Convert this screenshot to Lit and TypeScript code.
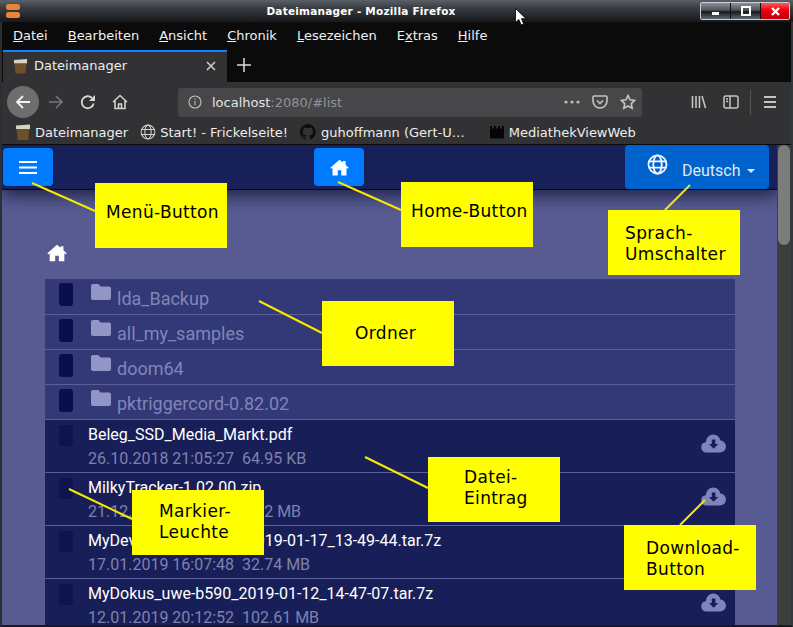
import { LitElement, html, css, svg } from "lit";
import { customElement } from "lit/decorators.js";

const homePath = "M12 3 1.5 12.2l1.2 1.3L4 12.4V21h6v-6h4v6h6v-8.6l1.3 1.1 1.2-1.3L19 9V4.5h-3v1.9z";
const homeIcon = (cls: string) => html`<svg class=${cls} viewBox="0 0 24 24"><path fill="#fff" d=${homePath}/></svg>`;
const folderIcon = html`<svg class="folder" viewBox="0 0 20 16"><path fill="#9296c6" d="M2 0h5.5l2 2.4H18a2 2 0 0 1 2 2V14a2 2 0 0 1-2 2H2a2 2 0 0 1-2-2V2a2 2 0 0 1 2-2z"/></svg>`;
const cloudIcon = html`<svg class="cloud" viewBox="0 0 25 19"><path fill="#7f84bc" d="M5.200 18.500A5.200 5.200 0 0 1 .2 13.300 5.200 5.200 0 0 1 4.800 8.200 7.800 7.800 0 0 1 12.400.5 7.800 7.800 0 0 1 19.400 6.500 6 6 0 0 1 25 12.500 6 6 0 0 1 19 18.500z"/><path fill="#181f58" d="M10.800 5.500h3.600V10h2.800l-4.600 4.800L8 10h2.800z"/></svg>`;
const boxIcon = (cls: string) => html`<svg class=${cls} viewBox="0 0 16 16"><path fill="#6d4f2c" d="M1.5 4h13l-1 11a1 1 0 0 1-1 1h-9a1 1 0 0 1-1-1z"/><path fill="#d8d2c4" d="M1 1.500 15 .5V5H1z"/></svg>`;
const globe = (cls: string, c: string, w: string) => html`<svg class=${cls} viewBox="0 0 20 20" fill="none" stroke=${c} stroke-width=${w}><circle cx="10" cy="10" r="8.6"/><ellipse cx="10" cy="10" rx="4" ry="8.6"/><path d="M1.800 7h16.400M1.800 13h16.400"/></svg>`;

const ANN = [
  { x: 95, y: 183, t: ["Menü-Button"], px: 11, py: 19 },
  { x: 401, y: 182, t: ["Home-Button"], px: 10, py: 19 },
  { x: 608, y: 210, t: ["Sprach-", "Umschalter"], px: 17, py: 13 },
  { x: 322, y: 301, t: ["Ordner"], px: 33, py: 22 },
  { x: 428, y: 457, t: ["Datei-", "Eintrag"], px: 36, py: 10 },
  { x: 132, y: 490, t: ["Markier-", "Leuchte"], px: 27, py: 11 },
  { x: 624, y: 525, t: ["Download-", "Button"], px: 22, py: 13 },
];
const LINES = [
  [32, 183, 95, 211], [338, 182, 401, 210], [690, 185, 665, 210], [259, 301, 322, 333],
  [365, 457, 428, 488], [69, 489, 132, 519], [705, 500, 680, 525],
];
const FOLDERS = ["lda_Backup", "all_my_samples", "doom64", "pktriggercord-0.82.02"];
const FILES = [
  ["Beleg_SSD_Media_Markt.pdf", "26.10.2018 21:05:27  64.95 KB"],
  ["MilkyTracker-1.02.00.zip", "21.12.2018 10:11:32  1.22 MB"],
  ["MyDevuan_uwe-b590_2019-01-17_13-49-44.tar.7z", "17.01.2019 16:07:48  32.74 MB"],
  ["MyDokus_uwe-b590_2019-01-12_14-47-07.tar.7z", "12.01.2019 20:12:52  102.61 MB"],
];

@customElement("app-root")
export class AppRoot extends LitElement {
  static styles = css`
    :host { display: block; position: relative; width: 793px; height: 627px; overflow: hidden; background: #0b0b0b; font-family: "DejaVu Sans", sans-serif; }
    .win { display: flex; flex-direction: column; height: 625px; border-left: 2px solid #2c2f33; border-right: 2px solid #33363a; border-bottom: 2px solid #17191c; box-sizing: content-box; width: 789px; }
    svg { display: block; flex: none; }
    .title { height: 22px; flex: none; margin-left: -2px; margin-right: -2px; background: linear-gradient(#5b6067, #3a3e44 35%, #1a1c1f 90%); display: flex; align-items: center; position: relative; }
    .title .tt { position: absolute; left: 0; width: 722px; text-align: center; color: #fff; font: bold 10.5px "DejaVu Sans", sans-serif; letter-spacing: .22px; }
    .orange { margin-left: 5px; width: 16px; height: 16px; }
    .wbtns { margin-left: auto; margin-right: 3px; display: flex; height: 16px; border: 1px solid #c9ced4; border-radius: 2px; box-sizing: content-box; }
    .wb { width: 29px; height: 16px; background: linear-gradient(#8b9299, #4c5257 45%, #16181a 55%, #5f6a6e); display: flex; align-items: center; justify-content: center; border-right: 1px solid #0f1012; }
    .wb.x { background: linear-gradient(#ff5a5a, #e8000f 45%, #c4000c); border: 0; width: 28px; }
    .menu { height: 28px; flex: none; box-sizing: border-box; padding: 0 0 2px 11px; background: #0b0b0b; display: flex; align-items: center; gap: 20px; color: #f1f1f1; font-size: 13px; }
    .tabs { height: 32px; flex: none; background: #0b0b0b; display: flex; align-items: stretch; }
    .tab { width: 224px; margin-left: 1px; background: #323234; border-top: 2px solid #0a84ff; display: flex; align-items: center; padding: 0 0 3px 10px; box-sizing: border-box; color: #eee; font-size: 13px; }
    .tab .fav { width: 15px; height: 16px; margin-right: 6px; }
    .tab .cl { margin-left: auto; margin-right: 11px; width: 10px; height: 10px; }
    .plus { width: 14px; height: 14px; margin: 8px 0 0 10px; }
    .nav { height: 35px; flex: none; box-sizing: border-box; padding-top: 5px; background: #323234; display: flex; align-items: center; position: relative; }
    .back { width: 32px; height: 32px; border-radius: 50%; background: #6e6e6f; margin-left: 5px; display: flex; align-items: center; justify-content: center; }
    .ic { width: 16px; height: 16px; }
    .fw { margin-left: 9px; }
    .rl { margin-left: 16px; }
    .hm { margin-left: 16px; }
    .url { margin-left: 50px; width: 464px; height: 29px; background: #474749; border-radius: 3px; display: flex; align-items: center; padding-left: 10px; box-sizing: border-box; font-size: 13px; color: #e4e4e4; }
    .url i { font-style: normal; color: #929293; }
    .url .inf { width: 14px; height: 14px; margin-right: 10px; }
    .url .r { margin-left: auto; display: flex; align-items: center; gap: 12px; margin-right: 6px; }
    .tools { display: flex; align-items: center; margin-left: 49px; }
    .tools .sb { margin-left: 16px; }
    .tools .dv { width: 1px; height: 25px; background: #555; margin: 0 11px; }
    .bm { height: 28px; flex: none; padding-top: 3px; background: #323234; display: flex; align-items: center; color: #eee; font-size: 13px; border-bottom: 1px solid #0b0b0b; box-sizing: border-box; }
    .bm span { white-space: nowrap; }
    .bm svg { width: 16px; height: 16px; margin-right: 4px; }
    .bm .b1 { margin-left: 13px; margin-right: 4px; }
    .bm .b2 { margin-left: 12px; }
    .bm .b3 { margin-left: 12px; margin-right: 5px; }
    .bm .b4 { margin-left: 25px; margin-right: 5px; width: 14px; }
    .page { flex: 1; display: flex; min-height: 0; }
    .view { flex: 1; min-width: 0; background: #575b92; font-family: Roboto, sans-serif; position: relative; display: flex; flex-direction: column; overflow: hidden; }
    .sbar { width: 14px; background: #3d3d3d; flex: none; }
    .thumb { width: 12px; height: 100px; margin-left: 1px; background: #7c7c7c; border-radius: 6px; }
    .bar { height: 44px; flex: none; background: #182059; border-bottom: 1px solid #0a0a14; box-shadow: 0 6px 16px rgba(10, 12, 40, .7); display: flex; align-items: flex-start; position: relative; box-sizing: content-box; }
    .btn { width: 50px; height: 38px; margin-top: 3px; background: #007bff; border-radius: 4px; display: flex; align-items: center; justify-content: center; }
    .btn.m { margin-left: 1px; }
    .btn.h { margin-left: 261px; }
    .btn svg.bars { width: 18px; height: 13px; }
    .btn svg.hi { width: 21px; height: 21px; }
    .lang { margin-left: auto; margin-right: 8px; width: 144px; height: 44px; background: #0062cc; border-radius: 4px; display: flex; align-items: flex-start; color: #dfe9f7; font-size: 16px; box-sizing: border-box; padding-left: 22px; }
    .lang .gl { width: 21px; height: 21px; margin-top: 9px; }
    .lang span { margin: 16px 0 0 14px; }
    .lang b { width: 0; height: 0; margin: 24px 0 0 7px; border: 4px solid transparent; border-top-color: #dfe9f7; border-bottom: 0; }
    .crumb { margin: 52px 0 0 44px; height: 24px; flex: none; }
    .crumb svg { width: 22px; height: 22px; }
    .list { margin: 13px 0 0 43px; width: 690px; flex: none; }
    .row { display: flex; position: relative; box-sizing: border-box; border-top: 1px solid #5a5f9b; }
    .row:first-child { border-top: 0; }
    .dir { height: 35px; background: #333877; align-items: flex-start; }
    .dot { width: 14px; border-radius: 3px; margin-left: 14px; flex: none; }
    .dir .dot { height: 23px; margin-top: 4px; background: #0a0f4b; }
    .folder { width: 20px; height: 16px; margin: 5px 0 0 18px; }
    .name { margin: 8px 0 0 6px; font-size: 18px; line-height: 22px; color: #8185b6; white-space: nowrap; }
    .row:first-child .name { margin-top: 9px; }
    .file { height: 53px; background: #181f58; }
    .file .dot { height: 21px; margin-top: 5px; background: #0f144d; }
    .info { margin-left: 15px; flex: 1; }
    .fn { margin-top: 5px; font-size: 16px; line-height: 20px; color: #fff; white-space: nowrap; }
    .dt { margin-top: 4px; font-size: 16px; line-height: 20px; color: #7e82ad; white-space: pre; }
    .cloud { width: 25px; height: 19px; position: absolute; right: 9px; top: 14px; }
    .ann { position: absolute; width: 132px; height: 65px; background: #ffff00; color: #000; font: 17px/21px "DejaVu Sans", sans-serif; letter-spacing: .35px; box-sizing: border-box; }
    .ann div { white-space: nowrap; }
    .lines { position: absolute; left: 0; top: 0; width: 793px; height: 627px; pointer-events: none; }
    .cursor { position: absolute; left: 515px; top: 8px; width: 12px; height: 18px; }
  `;

  render() {
    const st = "#d6d6d6";
    return html`
      <div class="win">
        <div class="title">
          <svg class="orange" viewBox="0 0 16 16"><rect x="1" y="1" width="14" height="6" rx="2.5" fill="#e8833a"/><rect x="1" y="9" width="14" height="6" rx="2.5" fill="#e8833a"/></svg>
          <div class="tt">Dateimanager - Mozilla Firefox</div>
          <div class="wbtns">
            <div class="wb"><svg width="8" height="8" viewBox="0 0 8 8"><rect y="5" width="7" height="3" fill="#fff"/></svg></div>
            <div class="wb"><svg width="10" height="10" viewBox="0 0 10 10"><rect x="1" y="1" width="8" height="8" fill="none" stroke="#fff" stroke-width="2"/></svg></div>
            <div class="wb x"><svg width="9" height="9" viewBox="0 0 9 9"><path d="M1 1l7 7M8 1 1 8" stroke="#fff" stroke-width="2.4"/></svg></div>
          </div>
        </div>
        <div class="menu">
          <span><u>D</u>atei</span><span><u>B</u>earbeiten</span><span><u>A</u>nsicht</span><span><u>C</u>hronik</span><span><u>L</u>esezeichen</span><span>E<u>x</u>tras</span><span><u>H</u>ilfe</span>
        </div>
        <div class="tabs">
          <div class="tab">${boxIcon("fav")}Dateimanager
            <svg class="cl" viewBox="0 0 10 10"><path d="M1 1l8 8M9 1 1 9" stroke="#ccc" stroke-width="1.6"/></svg>
          </div>
          <svg class="plus" viewBox="0 0 14 14"><path d="M7 0v14M0 7h14" stroke="#ddd" stroke-width="1.5"/></svg>
        </div>
        <div class="nav">
          <div class="back"><svg class="ic" viewBox="0 0 16 16" fill="none" stroke="#f2f2f2" stroke-width="1.8"><path d="M15 8H2M8 2 2 8l6 6"/></svg></div>
          <svg class="ic fw" viewBox="0 0 16 16" fill="none" stroke="#77777a" stroke-width="1.6"><path d="M1 8h13M8 2l6 6-6 6"/></svg>
          <svg class="ic rl" viewBox="0 0 16 16" fill="none" stroke=${st} stroke-width="1.8"><path d="M13.6 9.500A6 6 0 1 1 12 4"/><path fill=${st} stroke="none" d="M15 1v6H9z"/></svg>
          <svg class="ic hm" viewBox="0 0 16 16" fill="none" stroke=${st} stroke-width="1.5"><path d="M1 8l7-6.500L15 8M3 7v7.500h10V7"/><path d="M6.500 14.500V10h3v4.500"/></svg>
          <div class="url">
            <svg class="inf" viewBox="0 0 14 14" fill="none" stroke="#c0c0c0" stroke-width="1.1"><circle cx="7" cy="7" r="6"/><path d="M7 6v4.200M7 3.600v1.200"/></svg>
            <span>localhost<i>:2080/#list</i></span>
            <div class="r">
              <svg width="16" height="4" viewBox="0 0 16 4" fill="#bdbdbd"><circle cx="2" cy="2" r="1.6"/><circle cx="8" cy="2" r="1.6"/><circle cx="14" cy="2" r="1.6"/></svg>
              <svg class="ic" viewBox="0 0 16 16" fill="none" stroke="#c4c4c4" stroke-width="1.6"><path d="M2 2h12a1 1 0 0 1 1 1v4a7 7 0 0 1-14 0V3a1 1 0 0 1 1-1z"/><path d="M5 6.500l3 3 3-3"/></svg>
              <svg class="ic" viewBox="0 0 16 16" fill="none" stroke="#c4c4c4" stroke-width="1.6"><path d="M8 1.500l2 4.300 4.700.6-3.400 3.200.9 4.700L8 12l-4.200 2.300.9-4.700L1.300 6.400 6 5.800z"/></svg>
            </div>
          </div>
          <div class="tools">
            <svg class="ic" viewBox="0 0 16 16" fill="none" stroke="#c4c4c4" stroke-width="1.6"><path d="M1.500 2v12M5 2v12M8.500 2v12M11 2l3.500 12"/></svg>
            <svg class="ic sb" viewBox="0 0 16 16" fill="none" stroke="#c4c4c4" stroke-width="1.5"><rect x="1" y="2" width="14" height="12" rx="2"/><path d="M7 2v12M3 5h2M3 7.500h2"/></svg>
            <div class="dv"></div>
            <svg class="ic" viewBox="0 0 16 16" stroke="#c4c4c4" stroke-width="1.8"><path d="M2 3h12M2 8h12M2 13h12"/></svg>
          </div>
        </div>
        <div class="bm">
          ${boxIcon("b1")}<span>Dateimanager</span>
          ${globe("b2", "#cfcfcf", "1.3")}<span>Start! - Frickelseite!</span>
          <svg class="b3" viewBox="0 0 16 16"><path fill="#0d0d0d" d="M8 0a8 8 0 0 0-2.500 15.600c.4.1.5-.2.5-.4v-1.400c-2.200.5-2.700-1-2.700-1-.4-.9-.9-1.200-.9-1.200-.7-.5.1-.5.1-.5.8.1 1.200.8 1.200.8.7 1.200 1.900.9 2.300.7.100-.5.300-.9.500-1.100-1.800-.2-3.700-.9-3.700-4 0-.9.300-1.600.8-2.100-.1-.2-.4-1 .1-2.100 0 0 .7-.2 2.200.8a7.500 7.500 0 0 1 4 0c1.500-1 2.200-.8 2.200-.8.500 1.100.2 1.900.1 2.100.5.600.8 1.300.8 2.100 0 3.100-1.900 3.700-3.700 3.900.3.300.6.800.6 1.500v2.200c0 .2.100.5.600.4A8 8 0 0 0 8 0z"/></svg>
          <span>guhoffmann (Gert-U…</span>
          <svg class="b4" viewBox="0 0 14 14"><path fill="#050505" d="M0 1h2v2.500h2V1h2v2.500h2V1h2v2.500h2V1h2v12.500H0z"/></svg>
          <span>MediathekViewWeb</span>
        </div>
        <div class="page">
          <div class="view">
            <div class="bar">
              <div class="btn m"><svg class="bars" viewBox="0 0 18 13" fill="#fff"><rect width="18" height="2"/><rect y="5.500" width="18" height="2"/><rect y="11" width="18" height="2"/></svg></div>
              <div class="btn h">${homeIcon("hi")}</div>
              <div class="lang">${globe("gl", "#f4f7fc", "1.700")}<span>Deutsch</span><b></b></div>
            </div>
            <div class="crumb">${homeIcon("")}</div>
            <div class="list">
              ${FOLDERS.map((f) => html`<div class="row dir"><div class="dot"></div>${folderIcon}<div class="name">${f}</div></div>`)}
              ${FILES.map(([n, d]) => html`<div class="row file"><div class="dot"></div><div class="info"><div class="fn">${n}</div><div class="dt">${d}</div></div>${cloudIcon}</div>`)}
            </div>
          </div>
          <div class="sbar"><div class="thumb"></div></div>
        </div>
      </div>
      <svg class="lines" viewBox="0 0 793 627">${LINES.map(([a, b, c, d]) => svg`<line x1=${a} y1=${b} x2=${c} y2=${d} stroke="#f5ea00" stroke-width="2"/>`)}</svg>
      ${ANN.map((a) => html`<div class="ann" style="left:${a.x}px;top:${a.y}px;padding:${a.py}px 0 0 ${a.px}px">${a.t.map((l) => html`<div>${l}</div>`)}</div>`)}
      <svg class="cursor" viewBox="0 0 12 18"><path fill="#fff" stroke="#000" stroke-width=".8" d="M.5.500v14l3.400-3 2.300 5.500 2.500-1-2.300-5.300H11z"/></svg>
    `;
  }
}
